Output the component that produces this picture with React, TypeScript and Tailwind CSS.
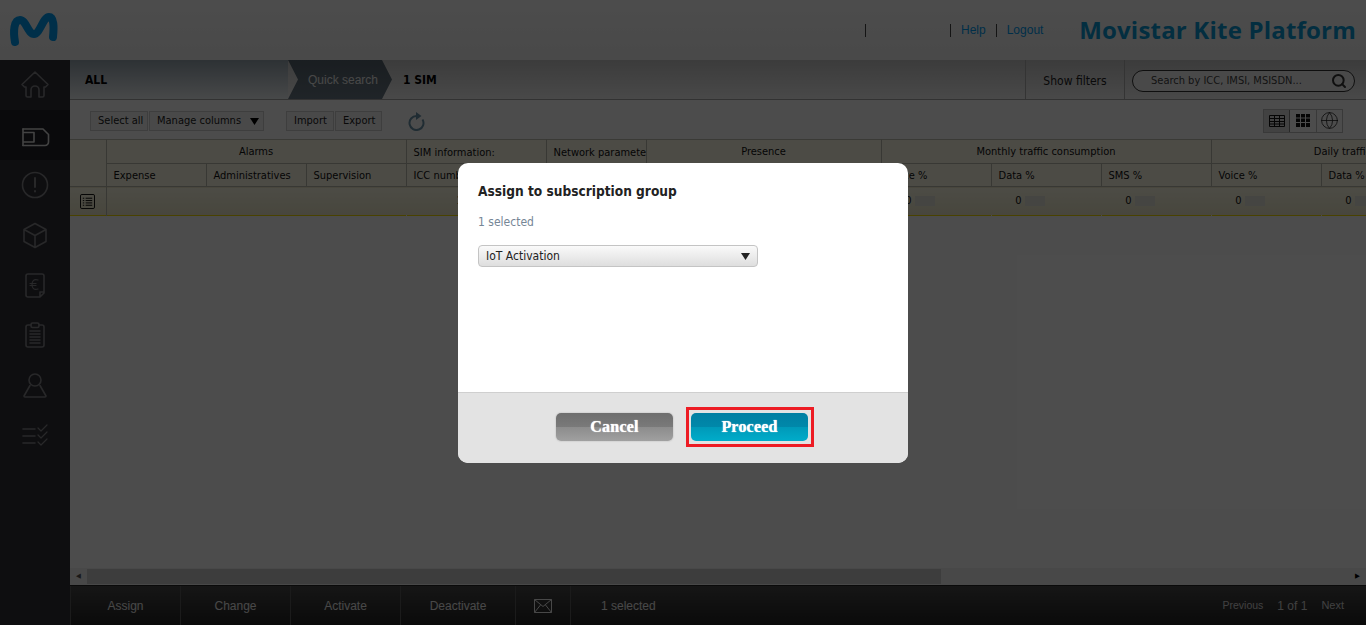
import { Search, Globe } from "lucide-react";

const FONT = "font-['DejaVu_Sans',sans-serif] [font-stretch:condensed]";
const ARIAL = "font-['Liberation_Sans',sans-serif]";

function SideIcon({ active, children }: { active?: boolean; children: React.ReactNode }) {
  return (
    <div className={`flex h-[50px] items-center justify-center ${active ? "bg-[#24242a]" : ""}`}>
      <svg width="30" height="30" viewBox="0 0 30 30" fill="none" stroke={active ? "#e0e0e0" : "#85858a"} strokeWidth="1.6" strokeLinecap="round" strokeLinejoin="round">
        {children}
      </svg>
    </div>
  );
}

function Sidebar() {
  return (
    <aside className="w-[70px] shrink-0 bg-[#303037]">
      <SideIcon>
        <path d="M2 14.500 15 2l13 12.500-2.500 2.500H24v8.500a1.500 1.500 0 0 1-1.500 1.500H19v-7a4 4 0 0 0-8 0v7H7.500A1.500 1.500 0 0 1 6 25.500V17H4.500z" />
      </SideIcon>
      <SideIcon active>
        <path d="M3 9h20l5.500 5.500V22a3.500 3.500 0 0 1-3.500 3.500H3" />
        <path d="M3 9v3.500M3 22v3.500M3 12.500h11V22H3z" />
      </SideIcon>
      <SideIcon>
        <circle cx="15" cy="15" r="12.500" />
        <path d="M15 8v9M15 21v.5" strokeWidth="2" />
      </SideIcon>
      <SideIcon>
        <path d="M15 3.500 26 9.500v12l-11 6-11-6v-12zM4 9.500l11 6 11-6M15 15.500v12" />
      </SideIcon>
      <SideIcon>
        <path d="M6 6a2 2 0 0 1 2-2h14a2 2 0 0 1 2 2v17l-4 4H8a2 2 0 0 1-2-2zM24 22h-4v5" />
        <path d="M18 10c-4-1.500-6 1-6 4.500s2 6 6 4.500M10 13.500h6M10 15.500h6" strokeWidth="1.200" />
      </SideIcon>
      <SideIcon>
        <path d="M11 5H8a2 2 0 0 0-2 2v18a2 2 0 0 0 2 2h14a2 2 0 0 0 2-2V7a2 2 0 0 0-2-2h-3" />
        <rect x="11" y="3" width="8" height="4.500" rx="1.500" />
        <path d="M10 11h10M10 14h10M10 17h10M10 20h10M10 23h10" />
      </SideIcon>
      <SideIcon>
        <circle cx="15" cy="10" r="6" />
        <path d="M10 15.500 4 26a1 1 0 0 0 1 1h20a1 1 0 0 0 1-1l-6-10.500" />
      </SideIcon>
      <SideIcon>
        <path d="M3 9h12M3 16h12M3 23h12" />
        <path d="m18 8 3 3 6-6M18 15l3 3 6-6M18 22l3 3 6-6" strokeWidth="1.200" />
      </SideIcon>
    </aside>
  );
}

function TopHeader() {
  return (
    <header className="flex h-[60px] shrink-0 items-center bg-gradient-to-b from-[#ffffff] to-[#f4f4f4] pr-[10px]">
      <svg width="70" height="60" viewBox="0 0 70 60" fill="none" stroke="#019df4" strokeWidth="8" strokeLinecap="round" className="shrink-0">
        <path d="M15 42C13 31 14 20 20 20c6 0 8 14 14 14s9-17 15-17c5 0 5 10 4 20" />
      </svg>
      <div className="ml-[795px] h-[13px] w-px bg-[#444]" />
      <div className="ml-[84px] h-[13px] w-px bg-[#444]" />
      <span className={`ml-[10px] text-[12px] text-[#019df4] ${ARIAL}`}>Help</span>
      <div className="ml-[10px] h-[13px] w-px bg-[#444]" />
      <span className={`ml-[10px] text-[12px] text-[#019df4] ${ARIAL}`}>Logout</span>
      <span className="ml-auto font-['Open_Sans',sans-serif] text-[24px] font-bold leading-none tracking-[0.2px] [font-stretch:normal] text-[#0b9ad6]">
        Movistar Kite Platform
      </span>
    </header>
  );
}

function Breadcrumb() {
  return (
    <div className="flex h-10 shrink-0 items-center border-b border-[#a8a8a8] bg-gradient-to-b from-[#c8c8c8] to-[#f4f4f4]">
      <div className="flex h-full w-[218px] items-center bg-gradient-to-b from-[#98a6b0] to-[#f0f4f6] pl-[15px] text-[12px] font-bold text-black">
        ALL
      </div>
      <div className={`flex h-full w-[104px] items-center bg-gradient-to-b from-[#56636e] to-[#6b7a86] pl-[20px] pt-[1px] text-[12px] text-[#f0f0f0] [clip-path:polygon(0_0,94px_0,104px_50%,94px_100%,0_100%,10px_50%)] ${ARIAL}`}>
        Quick search
      </div>
      <span className="ml-[11px] text-[12px] font-bold text-black">1 SIM</span>
      <div className="ml-auto flex h-full w-[100px] items-center justify-center border-x border-[#b0b0b0] pt-[2px] text-[12px] text-[#222]">
        Show filters
      </div>
      <div className="ml-[7px] mr-[11px] mt-[2px] flex h-[22px] w-[223px] items-center rounded-full border border-[#333] bg-[#f6f6f6] pl-[18px] pr-[7px] text-[11px] text-[#444]">
        <span className="flex-1 pt-[2px]">Search by ICC, IMSI, MSISDN...</span>
        <Search size={16} strokeWidth={3} className="text-[#333]" />
      </div>
    </div>
  );
}

function ToolButton({ label, arrow, width }: { label: string; arrow?: boolean; width: string }) {
  return (
    <div className={`flex h-[20px] items-center border border-[#d0d0d0] bg-[#f6f6f6] pl-[7px] pt-[1px] text-[11px] text-[#222] ${width}`}>
      {label}
      {arrow && (
        <svg width="9" height="7" viewBox="0 0 9 7" fill="#000" className="ml-[9px]">
          <path d="M0 0h9L4.500 7z" />
        </svg>
      )}
    </div>
  );
}

function Toolbar() {
  return (
    <div className="flex h-[39px] shrink-0 items-center bg-white pl-[20px] pr-[23px] pt-[2px]">
      <div className="flex gap-[1px]">
        <ToolButton label="Select all" width="w-[58px]" />
        <ToolButton label="Manage columns" arrow width="w-[115px]" />
      </div>
      <div className="ml-[22px] flex gap-[1px]">
        <ToolButton label="Import" width="w-[48px]" />
        <ToolButton label="Export" width="w-[47px]" />
      </div>
      <svg width="18" height="20" viewBox="0 0 18 20" fill="none" stroke="#6b94aa" strokeWidth="2" className="ml-[25px]">
        <path d="M9.500 5A7 7 0 1 0 15.500 8.400" />
        <path d="M9 1l5.500 4L9 9z" fill="#6b94aa" stroke="none" />
      </svg>
      <div className="ml-auto flex h-[24px] border border-[#c0c0c0]">
        <div className="flex w-[26px] items-center justify-center border-r border-[#888] bg-[#dcdcdc]">
          <svg width="16" height="12" viewBox="0 0 16 12" fill="none" stroke="#111" strokeWidth="1">
            <path d="M.5.5h15v11H.5zM.5 3.500h15M.5 6.500h15M.5 9h15M5.500.5v11M10.500.5v11" />
          </svg>
        </div>
        <div className="flex w-[27px] items-center justify-center border-r border-[#c0c0c0]">
          <svg width="14" height="13" viewBox="0 0 14 13" fill="#111">
            <path d="M0 0h4v3.500H0zM5 0h4v3.500H5zM10 0h4v3.500h-4zM0 4.500h4V8H0zM5 4.500h4V8H5zM10 4.500h4V8h-4zM0 9h4v4H0zM5 9h4v4H5zM10 9h4v4h-4z" />
          </svg>
        </div>
        <div className="flex w-[25px] items-center justify-center">
          <Globe size={19} strokeWidth={1} className="text-[#222]" />
        </div>
      </div>
    </div>
  );
}

const headCell = "border-b border-r border-[#bcbcb0] pt-[1px] font-normal text-[11px] text-[#111]";
const subCell = "border-b border-r border-[#bcbcb0] pl-[7px] pt-[3px] font-normal text-[11px] text-[#111]";

function Value() {
  return (
    <td className="border-r border-transparent">
      <div className="flex items-center justify-end gap-[3px] pr-[56px] text-[11px] text-[#111]">
        0<span className="h-[10px] w-[20px] bg-[#e8e8dc]" />
      </div>
    </td>
  );
}

function SimTable() {
  return (
    <div className="flex-1 overflow-hidden bg-white">
      <table className="w-[1471px] table-fixed border-collapse">
        <colgroup>
          <col className="w-[36px]" />
          <col className="w-[100px]" />
          <col className="w-[100px]" />
          <col className="w-[100px]" />
          <col className="w-[140px]" />
          <col className="w-[100px]" />
          <col className="w-[235px]" />
          <col className="w-[110px]" />
          <col className="w-[110px]" />
          <col className="w-[110px]" />
          <col className="w-[110px]" />
          <col className="w-[110px]" />
          <col className="w-[110px]" />
        </colgroup>
        <thead className="bg-[#fffbe8]">
          <tr className="h-[24px] border-t border-[#c4c4b4]">
            <th rowSpan={2} className={headCell} />
            <th colSpan={3} className={headCell}>Alarms</th>
            <th className={`${subCell} text-left`}>SIM information:</th>
            <th className={`${subCell} overflow-hidden whitespace-nowrap text-left`}>Network parameters</th>
            <th className={headCell}>Presence</th>
            <th colSpan={3} className={headCell}>Monthly traffic consumption</th>
            <th colSpan={3} className={headCell}>Daily traffic consumption</th>
          </tr>
          <tr className="h-[23px] text-left">
            <th className={subCell}>Expense</th>
            <th className={subCell}>Administratives</th>
            <th className={subCell}>Supervision</th>
            <th className={subCell}>ICC number</th>
            <th className={subCell} />
            <th className={subCell} />
            <th className={subCell}>Voice %</th>
            <th className={subCell}>Data %</th>
            <th className={subCell}>SMS %</th>
            <th className={subCell}>Voice %</th>
            <th className={subCell}>Data %</th>
            <th className={subCell}>SMS %</th>
          </tr>
        </thead>
        <tbody>
          <tr className="h-[29px] border-y border-[#f5dc00] bg-gradient-to-b from-[#fffde8] to-[#f0ebcc]">
            <td className="border-r border-[#bcbcb0]">
              <svg width="15" height="15" viewBox="0 0 16 16" fill="none" stroke="#000" strokeWidth="1" className="mx-auto">
                <rect x=".5" y=".5" width="15" height="15" rx="1.500" />
                <path d="M3 4.500h1.500M6 4.500h7M3 7h1.500M6 7h7M3 9.500h1.500M6 9.500h7M3 12h1.500M6 12h7" />
              </svg>
            </td>
            <td colSpan={3} className="border-r border-transparent" />
            <td className="pl-[50px] text-[11px] text-[#111]">1</td>
            <td />
            <td />
            <Value />
            <Value />
            <Value />
            <Value />
            <Value />
            <Value />
          </tr>
        </tbody>
      </table>
    </div>
  );
}

function ScrollBar() {
  return (
    <div className="flex h-[17px] shrink-0 items-center bg-[#f0f0f0]">
      <div className="flex w-[17px] justify-center text-[7px] text-[#555]">◀</div>
      <div className="h-[15px] w-[854px] bg-[#cdcdcd]" />
      <div className="ml-auto flex w-[17px] justify-center text-[7px] text-black">▶</div>
    </div>
  );
}

function BottomBar() {
  const item = "flex h-full items-center justify-center border-r border-[#5a5a5a] text-[12px] text-[#f0f0f0]";
  return (
    <footer className={`flex h-[40px] shrink-0 items-center border-t border-[#222] bg-gradient-to-b from-[#4a4a4a] to-[#232323] ${ARIAL}`}>
      <div className={`${item} w-[111px] border-l`}>Assign</div>
      <div className={`${item} w-[110px]`}>Change</div>
      <div className={`${item} w-[110px]`}>Activate</div>
      <div className={`${item} w-[115px]`}>Deactivate</div>
      <div className={`${item} w-[55px]`}>
        <svg width="18" height="14" viewBox="0 0 18 14" fill="none" stroke="#f0f0f0" strokeWidth="1">
          <path d="M.5.500h17v13H.5zM.5.500l8.500 7 8.500-7M.5 13.500l6-7.500M17.500 13.500l-6-7.500" />
        </svg>
      </div>
      <span className="ml-[30px] text-[12px] text-[#f0f0f0]">1 selected</span>
      <div className="ml-auto flex items-center pr-[22px] text-[10.5px] text-[#d8d8d8]">
        <span>Previous</span>
        <span className="ml-[14px] text-[12px]">1 of 1</span>
        <span className="ml-[14px] text-[11px]">Next</span>
      </div>
    </footer>
  );
}

function Modal() {
  const btn = "block h-[28px] w-[117px] rounded-[5px] font-['Liberation_Serif',serif] text-[16px] font-bold tracking-[0.2px] text-white [text-shadow:0_0_1px_#fff]";
  return (
    <div className="flex h-[300px] w-[450px] flex-col overflow-hidden rounded-[10px] bg-white">
      <div className="flex-1 px-5 pt-[18px]">
        <h2 className="text-[13.6px] font-bold leading-5 text-[#222]">Assign to subscription group</h2>
        <p className="mt-[11px] text-[12px] leading-5 text-[#768696]">1 selected</p>
        <div className="mt-[13px] flex h-[22px] w-[280px] items-center justify-between rounded-[4px] border border-[#c4c4c4] bg-gradient-to-b from-[#fafafa] to-[#dedede] px-[7px] pt-[1px] text-[12px] text-[#222]">
          IoT Activation
          <svg width="9" height="7" viewBox="0 0 9 7" fill="#222">
            <path d="M0 0h9L4.500 7z" />
          </svg>
        </div>
      </div>
      <div className="flex h-[71px] shrink-0 items-center justify-center gap-[13px] border-t border-[#cfcfcf] bg-[#e3e3e3] pb-[2px] pl-[4px]">
        <button className={`${btn} bg-[linear-gradient(#6e6e6e_0%,#7a7a7a_50%,#8c8c8c_50%,#a0a0a0_100%)] shadow-[0_0_1px_1px_#d4d4d4]`}>
          Cancel
        </button>
        <div className="border-[3px] border-[#ed1c24] py-[3px] pl-[2px] pr-[3px]">
          <button className={`${btn} bg-[linear-gradient(#007fa3_0%,#0088aa_50%,#0099b8_50%,#00acca_100%)]`}>
            Proceed
          </button>
        </div>
      </div>
    </div>
  );
}

export default function App() {
  return (
    <div className={`relative flex h-screen flex-col overflow-hidden bg-white ${FONT}`}>
      <TopHeader />
      <div className="flex min-h-0 flex-1">
        <Sidebar />
        <main className="flex min-w-0 flex-1 flex-col">
          <Breadcrumb />
          <Toolbar />
          <SimTable />
          <ScrollBar />
          <BottomBar />
        </main>
      </div>
      {/* dimmed backdrop + dialog */}
      <div className="absolute inset-0 flex items-center justify-center bg-black/70">
        <Modal />
      </div>
    </div>
  );
}
